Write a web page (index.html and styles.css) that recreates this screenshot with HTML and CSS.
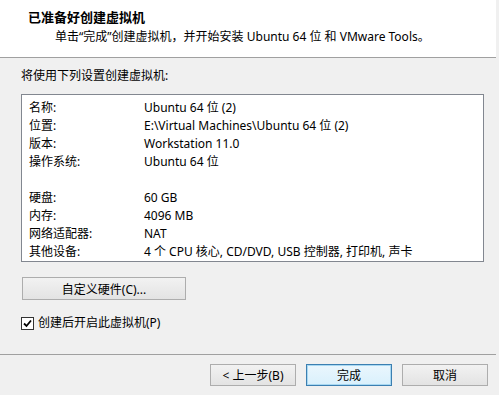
FILE: index.html
```html
<!DOCTYPE html>
<html lang="zh-CN">
<head>
    <meta charset="UTF-8">
    <meta name="viewport" content="width=device-width, initial-scale=1.0">
    <title>新建虚拟机向导</title>
    <link rel="stylesheet" href="styles.css">
</head>
<body>
    <div class="window">
        <div class="header">
            <div class="title">已准备好创建虚拟机</div>
            <div class="subtitle">单击“完成”创建虚拟机，并开始安装 Ubuntu 64 位 和 VMware Tools。</div>
        </div>

        <div class="content">
            <div class="intro">将使用下列设置创建虚拟机:</div>
            <div class="summary">
                <span>名称:</span><span>Ubuntu 64 位 (2)</span>
                <span>位置:</span><span>E:\Virtual Machines\Ubuntu 64 位 (2)</span>
                <span>版本:</span><span>Workstation 11.0</span>
                <span>操作系统:</span><span>Ubuntu 64 位</span>
                <span class="gap"></span><span class="gap"></span>
                <span>硬盘:</span><span>60 GB</span>
                <span>内存:</span><span>4096 MB</span>
                <span>网络适配器:</span><span>NAT</span>
                <span>其他设备:</span><span>4 个 CPU 核心, CD/DVD, USB 控制器, 打印机, 声卡</span>
            </div>
            <button class="btn btn-wide">自定义硬件(C)...</button>
            <label class="check">
                <span class="box">
                    <svg width="9" height="9" viewBox="0 0 9 9">
                        <path d="M1 4.5 L3.5 7 L8 1.5" fill="none" stroke="#000" stroke-width="1.8"/>
                    </svg>
                </span>
                创建后开启此虚拟机(P)
            </label>
        </div>

        <div class="footer">
            <button class="btn">&lt; 上一步(B)</button>
            <button class="btn btn-default">完成</button>
            <button class="btn">取消</button>
        </div>
    </div>
</body>
</html>
```

FILE: styles.css
```css
body {
    margin: 0;
    padding: 0;
    background: #f0f0f0;
    color: #000;
    font-family: "Noto Sans", "Noto Sans CJK SC", sans-serif;
    font-size: 12px;
    line-height: 18px;
}

.window {
    width: 496px;
    height: 395px;
    display: flex;
    flex-direction: column;
    background: #f0f0f0;
}

.header {
    height: 58px;
    background: #fff;
    border-bottom: 1px solid #a0a0a0;
    box-sizing: border-box;
    padding-top: 8px;
}

.title {
    padding-left: 28px;
    font-weight: bold;
    font-size: 13px;
}

.subtitle {
    padding-left: 55px;
    margin-top: 2px;
}

.content {
    padding: 9px 0 0 21px;
    height: 296px;
    box-sizing: border-box;
}

.intro {
    height: 18px;
}

.summary {
    width: 463px;
    height: 168px;
    box-sizing: border-box;
    margin-top: 9px;
    padding: 4px 0 0 7px;
    background: #fff;
    border: 1px solid #828790;
    display: grid;
    grid-template-columns: 115px 1fr;
    grid-auto-rows: 18px;
}

.summary span {
    white-space: nowrap;
}

.btn {
    font-family: inherit;
    font-size: 12px;
    height: 22px;
    width: 86px;
    padding: 0;
    border: 1px solid #adadad;
    background: linear-gradient(#f2f2f2, #e3e3e3);
    color: #000;
}

.btn-wide {
    display: block;
    width: 164px;
    height: 23px;
    margin: 15px 0 0 1px;
}

.btn-default {
    border-color: #3c7fb1;
    background: linear-gradient(#eaf6fd, #d9f0fc);
    box-shadow: inset 0 0 0 1px #a8d8f2;
}

.check {
    display: flex;
    align-items: center;
    gap: 4px;
    margin-top: 15px;
    height: 16px;
}

.box {
    width: 11px;
    height: 11px;
    border: 1px solid #333;
    background: #fff;
    display: flex;
    align-items: center;
    justify-content: center;
}

.footer {
    border-top: 1px solid #a0a0a0;
    flex: 1;
    display: flex;
    justify-content: flex-end;
    gap: 10px;
    padding: 9px 8px 0 0;
}
```
